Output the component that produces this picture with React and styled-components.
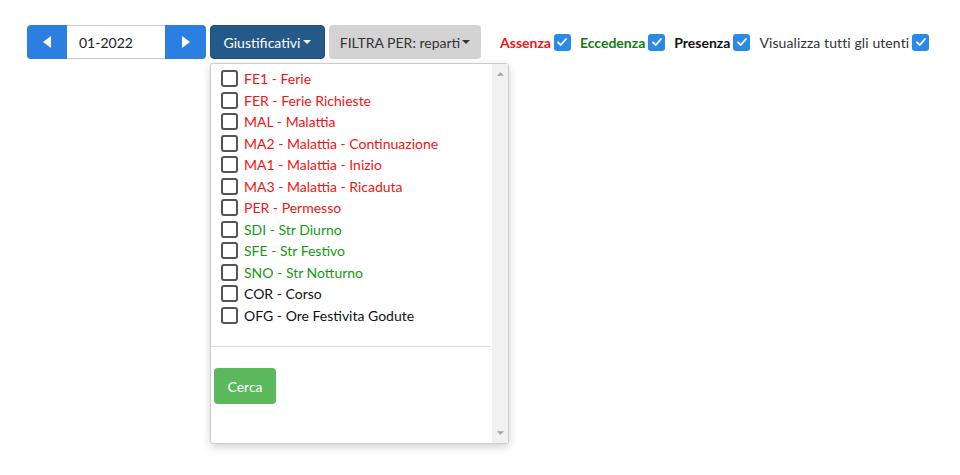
import React, { useState } from 'react'
import styled, { createGlobalStyle } from 'styled-components'

const GlobalStyle = createGlobalStyle`
  html, body {
    margin: 0;
    background: #fff;
    font-family: Lato, "Noto Sans", sans-serif;
    font-size: 14px;
    color: #222;
  }
`

const items = [
  { code: 'FE1', label: 'Ferie', tone: 'red' },
  { code: 'FER', label: 'Ferie Richieste', tone: 'red' },
  { code: 'MAL', label: 'Malattia', tone: 'red' },
  { code: 'MA2', label: 'Malattia - Continuazione', tone: 'red' },
  { code: 'MA1', label: 'Malattia - Inizio', tone: 'red' },
  { code: 'MA3', label: 'Malattia - Ricaduta', tone: 'red' },
  { code: 'PER', label: 'Permesso', tone: 'red' },
  { code: 'SDI', label: 'Str Diurno', tone: 'green' },
  { code: 'SFE', label: 'Str Festivo', tone: 'green' },
  { code: 'SNO', label: 'Str Notturno', tone: 'green' },
  { code: 'COR', label: 'Corso', tone: 'black' },
  { code: 'OFG', label: 'Ore Festivita Godute', tone: 'black' },
]

const tones = { red: '#f01414', green: '#139a13', black: '#111' }

function Check({ checked }) {
  return (
    <Box $checked={checked}>
      {checked && (
        <svg width="12" height="12" viewBox="0 0 12 12">
          <path d="M2 6.3 L4.8 9 L10 3" fill="none" stroke="#fff" strokeWidth="1.8" strokeLinecap="round" strokeLinejoin="round" />
        </svg>
      )}
    </Box>
  )
}

function Caret() {
  return <CaretIcon viewBox="0 0 8 4"><path d="M0 0 H8 L4 4 Z" fill="currentColor" /></CaretIcon>
}

export default function App() {
  const [month] = useState('01-2022')
  return (
    <Page>
      <GlobalStyle />
      <Toolbar>
        <MonthGroup>
          <ArrowButton $side="left">
            <svg width="8" height="12" viewBox="0 0 8 12"><path d="M8 0 V12 L0 6 Z" fill="#fff" /></svg>
          </ArrowButton>
          <MonthInput value={month} readOnly />
          <ArrowButton $side="right">
            <svg width="8" height="12" viewBox="0 0 8 12"><path d="M0 0 V12 L8 6 Z" fill="#fff" /></svg>
          </ArrowButton>
        </MonthGroup>

        <DropWrap>
          <DarkButton>Giustificativi <Caret /></DarkButton>
          <Menu>
            <MenuList>
              {items.map((it) => (
                <Item key={it.code} $tone={it.tone}>
                  <Check checked={false} />
                  <span>{it.code} - {it.label}</span>
                </Item>
              ))}
            </MenuList>
            <Divider />
            <Footer>
              <SearchButton>Cerca</SearchButton>
            </Footer>
            <Scrollbar>
              <ScrollArrow viewBox="0 0 8 4"><path d="M0 4 H8 L4 0 Z" fill="#a3a3a3" /></ScrollArrow>
              <ScrollArrow viewBox="0 0 8 4"><path d="M0 0 H8 L4 4 Z" fill="#a3a3a3" /></ScrollArrow>
            </Scrollbar>
          </Menu>
        </DropWrap>

        <GrayButton>FILTRA PER: reparti<Caret /></GrayButton>

        <Legend>
          <LegendItem>
            <LegendLabel $color="#f01414" $bold>Assenza</LegendLabel>
            <Check checked />
          </LegendItem>
          <LegendItem>
            <LegendLabel $color="#137a13" $bold>Eccedenza</LegendLabel>
            <Check checked />
          </LegendItem>
          <LegendItem>
            <LegendLabel $color="#111" $bold>Presenza</LegendLabel>
            <Check checked />
          </LegendItem>
          <LegendItem>
            <LegendLabel $color="#333" $wide>Visualizza tutti gli utenti</LegendLabel>
            <Check checked />
          </LegendItem>
        </Legend>
      </Toolbar>
    </Page>
  )
}

const Page = styled.div`
  padding: 25px 27px;
  min-height: 475px;
  box-sizing: border-box;
`

const Toolbar = styled.div`
  display: flex;
  align-items: flex-start;
  gap: 4px;
`

const MonthGroup = styled.div`
  display: flex;
  height: 34px;
`

const ArrowButton = styled.button`
  width: ${(p) => (p.$side === 'left' ? '40px' : '41px')};
  height: 34px;
  border: none;
  background: #2a7fe0;
  display: flex;
  align-items: center;
  justify-content: center;
  padding: 0;
  border-radius: ${(p) => (p.$side === 'left' ? '4px 0 0 4px' : '0 4px 4px 0')};
`

const MonthInput = styled.input`
  width: 98px;
  box-sizing: border-box;
  height: 34px;
  border: 1px solid #ccc;
  border-left: none;
  border-right: none;
  padding: 0 12px;
  font-family: inherit;
  font-size: 14px;
  color: #222;
  outline: none;
`

const DropWrap = styled.div`
  position: relative;
`

const DarkButton = styled.button`
  height: 34px;
  padding: 0 12px;
  background: #245a87;
  color: #fff;
  border: 1px solid #1e4d75;
  border-radius: 4px;
  font-family: inherit;
  font-size: 14px;
  display: flex;
  align-items: center;
  gap: 3px;
  width: 115px;
  justify-content: center;
`

const GrayButton = styled.button`
  height: 34px;
  width: 152px;
  background: #d3d3d3;
  color: #333;
  border: none;
  border-radius: 4px;
  font-family: inherit;
  font-size: 14px;
  display: flex;
  align-items: center;
  justify-content: center;
  gap: 2px;
`

const CaretIcon = styled.svg`
  width: 8px;
  height: 4px;
`

const Menu = styled.div`
  position: absolute;
  top: 38px;
  left: 0;
  width: 299px;
  height: 381px;
  box-sizing: border-box;
  background: #fff;
  border: 1px solid #ccc;
  border-radius: 3px;
  box-shadow: 0 3px 8px rgba(0, 0, 0, 0.18);
  padding-right: 17px;
  z-index: 10;
`

const MenuList = styled.div`
  display: flex;
  flex-direction: column;
  padding: 4px 0 0 10px;
`

const Item = styled.label`
  display: flex;
  align-items: center;
  gap: 6px;
  height: 21.5px;
  color: ${(p) => tones[p.$tone]};
  font-size: 14px;
`

const Box = styled.span`
  width: 17px;
  height: 17px;
  box-sizing: border-box;
  flex-shrink: 0;
  border-radius: 3px;
  display: inline-flex;
  align-items: center;
  justify-content: center;
  background: ${(p) => (p.$checked ? '#2a8ae6' : '#fff')};
  border: ${(p) => (p.$checked ? 'none' : '2px solid #555')};
`

const Divider = styled.div`
  height: 1px;
  background: #ddd;
  margin-top: 20px;
`

const Footer = styled.div`
  padding: 21px 3px;
`

const SearchButton = styled.button`
  background: #5cb85c;
  color: #fff;
  border: none;
  border-radius: 4px;
  width: 62px;
  height: 36px;
  font-family: inherit;
  font-size: 14px;
`

const Scrollbar = styled.div`
  position: absolute;
  top: 0;
  right: 0;
  bottom: 0;
  width: 16px;
  background: #f1f1f1;
  display: flex;
  flex-direction: column;
  justify-content: space-between;
  align-items: center;
  padding: 8px 0;
  box-sizing: border-box;
`

const ScrollArrow = styled.svg`
  width: 7px;
  height: 4px;
`

const Legend = styled.div`
  display: flex;
  align-items: center;
  height: 34px;
  margin-left: 15px;
  gap: 9px;
`

const LegendItem = styled.div`
  display: flex;
  align-items: center;
  gap: 3px;
`

const LegendLabel = styled.span`
  color: ${(p) => p.$color};
  font-weight: ${(p) => (p.$bold ? 700 : 400)};
  letter-spacing: ${(p) => (p.$wide ? '0.1px' : '0')};
  font-size: 14px;
`
